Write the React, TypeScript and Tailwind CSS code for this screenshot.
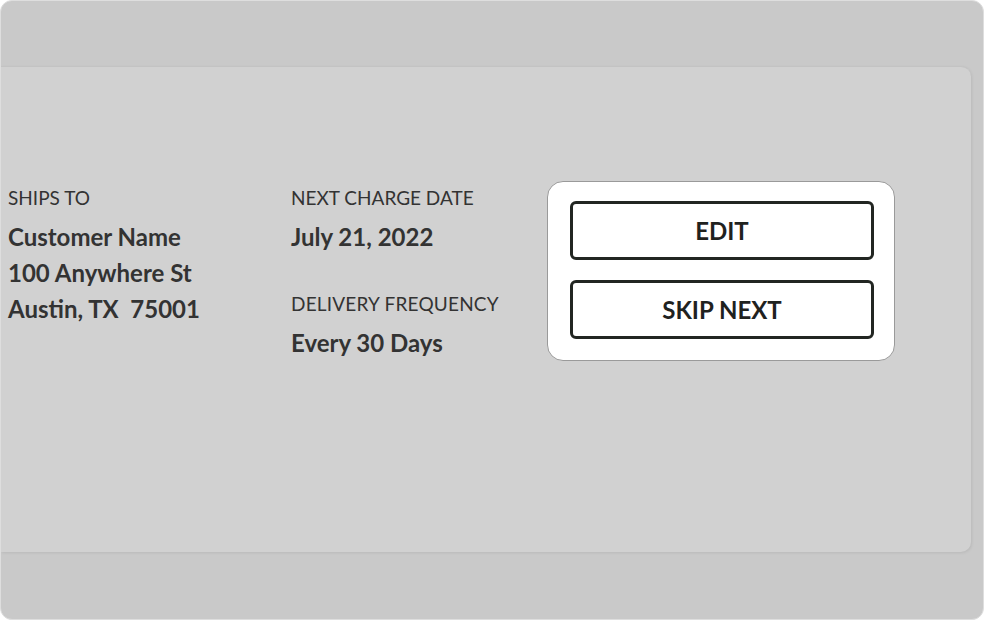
import React from "react";

export default function App() {
  return (
    <div className="w-[984px] h-[620px] bg-white" style={{ fontFamily: "Lato, 'Noto Sans', sans-serif" }}>
      <div className="w-[984px] h-[620px] rounded-[12px] bg-[#c9c9c9] border border-[#dedede] overflow-hidden pt-[65px]">
        <div className="w-[970px] h-[486px] bg-[#d1d1d1] rounded-r-[10px] border-t border-[#c3c3c3] shadow-[1px_1px_3px_rgba(0,0,0,0.08)] pt-[119px] flex text-[#333]">
          <div className="w-[290px] pl-[7px]">
            <div className="text-[19px] leading-[24px]">SHIPS TO</div>
            <div className="mt-[9px] text-[24px] font-bold leading-[36px]">
              <div>Customer Name</div>
              <div>100 Anywhere St</div>
              <div>Austin, TX&nbsp; 75001</div>
            </div>
          </div>
          <div className="w-[256px]">
            <div className="text-[19px] leading-[24px]">NEXT CHARGE DATE</div>
            <div className="mt-[9px] text-[24px] font-bold leading-[36px]">July 21, 2022</div>
            <div className="mt-[37px] text-[19px] leading-[24px] tracking-[0.2px]">DELIVERY FREQUENCY</div>
            <div className="mt-[9px] text-[24px] font-bold leading-[36px]">Every 30 Days</div>
          </div>
          <div className="-mt-[5px] w-[348px] h-[180px] bg-white border border-[#9a9a9a] rounded-[16px] pl-[22px] pr-[20px] pt-[19px] flex flex-col gap-[20px] self-start">
            <button className="h-[59px] w-full border-[3px] border-[#222622] rounded-[6px] text-[24px] font-bold text-[#1f221f]">EDIT</button>
            <button className="h-[59px] w-full border-[3px] border-[#222622] rounded-[6px] text-[24px] font-bold text-[#1f221f]">SKIP NEXT</button>
          </div>
        </div>
      </div>
    </div>
  );
}
